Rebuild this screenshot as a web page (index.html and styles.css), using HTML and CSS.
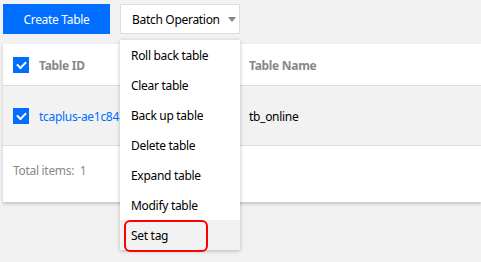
FILE: index.html
```html
<!DOCTYPE html>
<html lang="en">
<head>
    <meta charset="UTF-8">
    <title>Tables</title>
    <link rel="stylesheet" href="styles.css">
</head>
<body>
    <div class="toolbar">
        <button class="btn-primary">Create Table</button>
        <div class="batch">
            <button class="btn-batch">Batch Operation <span class="caret"></span></button>
            <ul class="menu">
                <li>Roll back table</li>
                <li>Clear table</li>
                <li>Back up table</li>
                <li>Delete table</li>
                <li>Expand table</li>
                <li>Modify table</li>
                <li class="hover">Set tag</li>
            </ul>
            <div class="mark"></div>
        </div>
    </div>

    <div class="card">
        <div class="row head">
            <div class="col-id"><span class="check"></span>Table ID</div>
            <div class="col-name">Table Name</div>
        </div>
        <div class="row data">
            <div class="col-id"><span class="check"></span><a href="#">tcaplus-ae1c84</a></div>
            <div class="col-name">tb_online</div>
        </div>
        <div class="footer">Total items:&nbsp; 1</div>
    </div>
</body>
</html>
```

FILE: styles.css
```css
* {
    margin: 0;
    padding: 0;
    box-sizing: border-box;
}

html {
    background: #f2f2f2;
}

body {
    font-family: "Noto Sans", sans-serif;
    font-size: 12px;
    letter-spacing: -0.3px;
    background: #f2f2f2;
    color: #000;
    padding: 4px 0 0 3px;
    min-height: 100vh;
}

.toolbar {
    display: flex;
    gap: 10px;
    position: relative;
    z-index: 2;
}

button {
    font-family: inherit;
    font-size: 12px;
    letter-spacing: inherit;
    height: 30px;
    padding-top: 1px;
    white-space: nowrap;
    cursor: pointer;
}

.btn-primary {
    width: 107px;
    background: #006eff;
    color: #fff;
    border: none;
}

.batch {
    position: relative;
}

.btn-batch {
    width: 120px;
    background: #fff;
    color: #000;
    border: 1px solid #ddd;
    padding-left: 11px;
    display: flex;
    align-items: center;
}

.caret {
    border-top: 5px solid #888;
    border-left: 4px solid transparent;
    border-right: 4px solid transparent;
    margin-left: 8px;
}

.menu {
    position: absolute;
    top: 36px;
    left: 0;
    width: 120px;
    list-style: none;
    background: #fff;
    box-shadow: 0 1px 4px rgba(0, 0, 0, 0.25);
}

.menu li {
    height: 30px;
    line-height: 30px;
    padding: 1px 0 0 11px;
}

.menu li.hover {
    background: #f2f2f2;
}

.mark {
    position: absolute;
    left: 4px;
    top: 216px;
    width: 84px;
    height: 32px;
    border: 2px solid #f00;
    border-radius: 6px;
}

.card {
    margin-top: 10px;
    width: 478px;
    background: #fff;
    box-shadow: 0 2px 3px rgba(0, 0, 0, 0.2);
}

.row {
    display: flex;
    align-items: center;
    border-bottom: 1px solid #ddd;
}

.head {
    height: 42px;
    padding-top: 2px;
    color: #888;
    font-weight: bold;
}

.head .check {
    margin-top: -2px;
}

.data {
    height: 60px;
    padding-top: 1px;
    background: #f2f2f2;
}

.col-id {
    width: 246px;
    padding-left: 10px;
    display: flex;
    align-items: center;
}

.check {
    width: 16px;
    height: 16px;
    background: #006eff;
    margin-right: 10px;
    position: relative;
}

.check::after {
    content: "";
    position: absolute;
    left: 4px;
    top: 4px;
    width: 7px;
    height: 4px;
    border-left: 2px solid #fff;
    border-bottom: 2px solid #fff;
    transform: rotate(-45deg);
}

.col-id a {
    color: #006eff;
    text-decoration: none;
}

.footer {
    height: 56px;
    line-height: 50px;
    padding-left: 10px;
    color: #888;
}
```
